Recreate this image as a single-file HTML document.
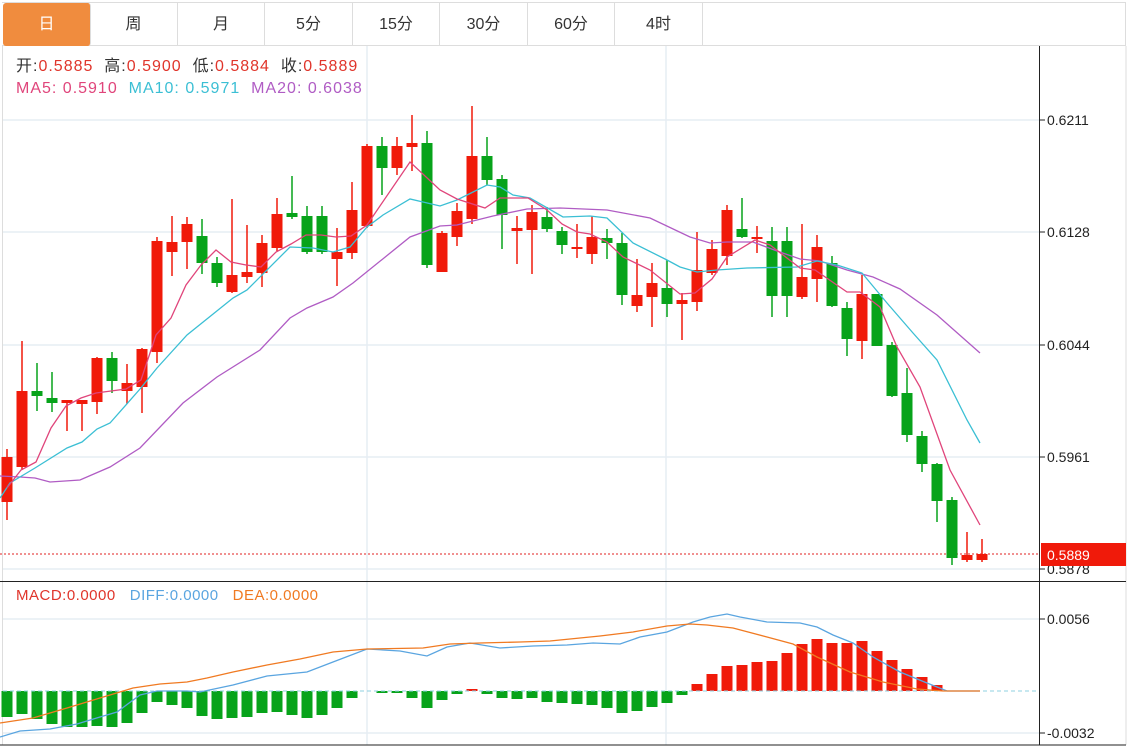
<!DOCTYPE html>
<html><head><meta charset="utf-8">
<style>
html,body{margin:0;padding:0;background:#fff;}
body{width:1136px;height:746px;position:relative;overflow:hidden;font-family:"Liberation Sans","Noto Sans CJK SC",sans-serif;}
.tabs{position:absolute;left:2px;top:2px;width:1124px;height:44px;border-top:1px solid #ddd;border-bottom:1px solid #ddd;border-right:1px solid #ddd;box-sizing:border-box;}
.tab{position:absolute;top:0;height:43px;line-height:43px;text-align:center;font-size:16px;color:#333;border-right:1px solid #ddd;box-sizing:border-box;}
.tab.on{background:#f08c3e;color:#fff;border-radius:3px;}
.lg{position:absolute;font-size:16px;letter-spacing:1px;white-space:pre;line-height:20px;height:20px;}
svg{position:absolute;left:0;top:0;}
</style></head><body>
<div class="tabs">
<div class="tab on" style="left:1px;width:88px">日</div>
<div class="tab" style="left:88px;width:88px">周</div>
<div class="tab" style="left:176px;width:87px">月</div>
<div class="tab" style="left:263px;width:88px">5分</div>
<div class="tab" style="left:351px;width:87px">15分</div>
<div class="tab" style="left:438px;width:88px">30分</div>
<div class="tab" style="left:526px;width:87px">60分</div>
<div class="tab" style="left:613px;width:88px">4时</div>
</div>
<svg width="1136" height="746" viewBox="0 0 1136 746">
<g stroke="#e6edf3" stroke-width="1.5">
<line x1="3" y1="120" x2="1039" y2="120"/><line x1="3" y1="232" x2="1039" y2="232"/><line x1="3" y1="345" x2="1039" y2="345"/><line x1="3" y1="457" x2="1039" y2="457"/><line x1="3" y1="569" x2="1039" y2="569"/>
<line x1="3" y1="619" x2="1039" y2="619"/><line x1="3" y1="733" x2="1039" y2="733"/>
<line x1="367" y1="46" x2="367" y2="745"/><line x1="666" y1="46" x2="666" y2="745"/>
</g>
<line x1="2.5" y1="46" x2="2.5" y2="745" stroke="#ddd"/>
<line x1="1126" y1="46" x2="1126" y2="745" stroke="#ddd"/>
<line x1="0" y1="581.5" x2="1126" y2="581.5" stroke="#222"/>
<line x1="0" y1="745" x2="1126" y2="745" stroke="#222"/>
<line x1="1039.5" y1="46" x2="1039.5" y2="745" stroke="#222"/>
<g stroke="#222"><line x1="1040" y1="120" x2="1045" y2="120"/><line x1="1040" y1="232" x2="1045" y2="232"/><line x1="1040" y1="345" x2="1045" y2="345"/><line x1="1040" y1="457" x2="1045" y2="457"/><line x1="1040" y1="569" x2="1045" y2="569"/><line x1="1040" y1="619" x2="1045" y2="619"/><line x1="1040" y1="733" x2="1045" y2="733"/></g>
<g font-family="Liberation Sans, sans-serif" font-size="14" fill="#222">
<text x="1047" y="125">0.6211</text><text x="1047" y="237">0.6128</text><text x="1047" y="350">0.6044</text><text x="1047" y="462">0.5961</text><text x="1047" y="574">0.5878</text><text x="1047" y="624">0.0056</text><text x="1047" y="738">-0.0032</text>
</g>
<line x1="0" y1="554" x2="1039" y2="554" stroke="#e02020" stroke-dasharray="2,2"/>
<rect x="1041" y="543" width="85" height="23" fill="#f01a0a"/>
<text x="1047" y="560" font-family="Liberation Sans, sans-serif" font-size="14" fill="#fff">0.5889</text>

<g fill="#f01a0a" stroke="#f01a0a" stroke-width="1.5">
<line x1="7" y1="449" x2="7" y2="520"/><rect x="1.5" y="457" width="11" height="45" stroke="none"/>
<line x1="22" y1="341" x2="22" y2="470"/><rect x="16.5" y="391" width="11" height="76" stroke="none"/>
<line x1="67" y1="400" x2="67" y2="431"/><rect x="61.5" y="400" width="11" height="3" stroke="none"/>
<line x1="82" y1="400" x2="82" y2="431"/><rect x="76.5" y="400" width="11" height="4" stroke="none"/>
<line x1="97" y1="357" x2="97" y2="414"/><rect x="91.5" y="358" width="11" height="44" stroke="none"/>
<line x1="127" y1="364" x2="127" y2="404"/><rect x="121.5" y="383" width="11" height="8" stroke="none"/>
<line x1="142" y1="348" x2="142" y2="413"/><rect x="136.5" y="349" width="11" height="38" stroke="none"/>
<line x1="157" y1="237" x2="157" y2="363"/><rect x="151.5" y="241" width="11" height="111" stroke="none"/>
<line x1="172" y1="216" x2="172" y2="276"/><rect x="166.5" y="242" width="11" height="10" stroke="none"/>
<line x1="187" y1="217" x2="187" y2="269"/><rect x="181.5" y="224" width="11" height="18" stroke="none"/>
<line x1="232" y1="199" x2="232" y2="293"/><rect x="226.5" y="275" width="11" height="17" stroke="none"/>
<line x1="247" y1="225" x2="247" y2="283"/><rect x="241.5" y="272" width="11" height="5" stroke="none"/>
<line x1="262" y1="235" x2="262" y2="287"/><rect x="256.5" y="243" width="11" height="30" stroke="none"/>
<line x1="277" y1="198" x2="277" y2="251"/><rect x="271.5" y="214" width="11" height="34" stroke="none"/>
<line x1="337" y1="228" x2="337" y2="286"/><rect x="331.5" y="252" width="11" height="7" stroke="none"/>
<line x1="352" y1="182" x2="352" y2="259"/><rect x="346.5" y="210" width="11" height="43" stroke="none"/>
<line x1="367" y1="144" x2="367" y2="228"/><rect x="361.5" y="146" width="11" height="80" stroke="none"/>
<line x1="397" y1="137" x2="397" y2="175"/><rect x="391.5" y="146" width="11" height="22" stroke="none"/>
<line x1="412" y1="115" x2="412" y2="171"/><rect x="406.5" y="143" width="11" height="4" stroke="none"/>
<line x1="442" y1="231" x2="442" y2="272"/><rect x="436.5" y="233" width="11" height="39" stroke="none"/>
<line x1="457" y1="203" x2="457" y2="246"/><rect x="451.5" y="211" width="11" height="26" stroke="none"/>
<line x1="472" y1="106" x2="472" y2="224"/><rect x="466.5" y="156" width="11" height="63" stroke="none"/>
<line x1="517" y1="216" x2="517" y2="264"/><rect x="511.5" y="228" width="11" height="3" stroke="none"/>
<line x1="532" y1="205" x2="532" y2="274"/><rect x="526.5" y="212" width="11" height="18" stroke="none"/>
<line x1="577" y1="224" x2="577" y2="258"/><rect x="571.5" y="247" width="11" height="2" stroke="none"/>
<line x1="592" y1="216" x2="592" y2="264"/><rect x="586.5" y="237" width="11" height="17" stroke="none"/>
<line x1="637" y1="259" x2="637" y2="312"/><rect x="631.5" y="295" width="11" height="11" stroke="none"/>
<line x1="652" y1="263" x2="652" y2="327"/><rect x="646.5" y="283" width="11" height="14" stroke="none"/>
<line x1="682" y1="293" x2="682" y2="340"/><rect x="676.5" y="300" width="11" height="4" stroke="none"/>
<line x1="697" y1="232" x2="697" y2="311"/><rect x="691.5" y="270" width="11" height="32" stroke="none"/>
<line x1="712" y1="240" x2="712" y2="275"/><rect x="706.5" y="249" width="11" height="24" stroke="none"/>
<line x1="727" y1="205" x2="727" y2="265"/><rect x="721.5" y="210" width="11" height="46" stroke="none"/>
<line x1="757" y1="226" x2="757" y2="253"/><rect x="751.5" y="237" width="11" height="2" stroke="none"/>
<line x1="802" y1="224" x2="802" y2="299"/><rect x="796.5" y="277" width="11" height="20" stroke="none"/>
<line x1="817" y1="235" x2="817" y2="302"/><rect x="811.5" y="247" width="11" height="32" stroke="none"/>
<line x1="862" y1="275" x2="862" y2="359"/><rect x="856.5" y="294" width="11" height="47" stroke="none"/>
<line x1="967" y1="532" x2="967" y2="562"/><rect x="961.5" y="555" width="11" height="5" stroke="none"/>
<line x1="982" y1="539" x2="982" y2="562"/><rect x="976.5" y="554" width="11" height="6" stroke="none"/>
</g>
<g fill="#07a31a" stroke="#07a31a" stroke-width="1.5">
<line x1="37" y1="363" x2="37" y2="411"/><rect x="31.5" y="391" width="11" height="5" stroke="none"/>
<line x1="52" y1="372" x2="52" y2="412"/><rect x="46.5" y="398" width="11" height="5" stroke="none"/>
<line x1="112" y1="352" x2="112" y2="393"/><rect x="106.5" y="358" width="11" height="23" stroke="none"/>
<line x1="202" y1="219" x2="202" y2="274"/><rect x="196.5" y="236" width="11" height="27" stroke="none"/>
<line x1="217" y1="257" x2="217" y2="287"/><rect x="211.5" y="263" width="11" height="20" stroke="none"/>
<line x1="292" y1="176" x2="292" y2="219"/><rect x="286.5" y="213" width="11" height="4" stroke="none"/>
<line x1="307" y1="206" x2="307" y2="254"/><rect x="301.5" y="216" width="11" height="36" stroke="none"/>
<line x1="322" y1="206" x2="322" y2="254"/><rect x="316.5" y="216" width="11" height="36" stroke="none"/>
<line x1="382" y1="137" x2="382" y2="195"/><rect x="376.5" y="146" width="11" height="22" stroke="none"/>
<line x1="427" y1="131" x2="427" y2="268"/><rect x="421.5" y="143" width="11" height="122" stroke="none"/>
<line x1="487" y1="137" x2="487" y2="185"/><rect x="481.5" y="156" width="11" height="24" stroke="none"/>
<line x1="502" y1="175" x2="502" y2="249"/><rect x="496.5" y="179" width="11" height="36" stroke="none"/>
<line x1="547" y1="207" x2="547" y2="232"/><rect x="541.5" y="217" width="11" height="12" stroke="none"/>
<line x1="562" y1="227" x2="562" y2="254"/><rect x="556.5" y="231" width="11" height="14" stroke="none"/>
<line x1="607" y1="229" x2="607" y2="259"/><rect x="601.5" y="238" width="11" height="5" stroke="none"/>
<line x1="622" y1="233" x2="622" y2="305"/><rect x="616.5" y="243" width="11" height="52" stroke="none"/>
<line x1="667" y1="260" x2="667" y2="317"/><rect x="661.5" y="288" width="11" height="16" stroke="none"/>
<line x1="742" y1="198" x2="742" y2="238"/><rect x="736.5" y="229" width="11" height="8" stroke="none"/>
<line x1="772" y1="227" x2="772" y2="317"/><rect x="766.5" y="241" width="11" height="55" stroke="none"/>
<line x1="787" y1="227" x2="787" y2="317"/><rect x="781.5" y="241" width="11" height="55" stroke="none"/>
<line x1="832" y1="256" x2="832" y2="307"/><rect x="826.5" y="263" width="11" height="43" stroke="none"/>
<line x1="847" y1="302" x2="847" y2="356"/><rect x="841.5" y="308" width="11" height="31" stroke="none"/>
<line x1="877" y1="294" x2="877" y2="346"/><rect x="871.5" y="294" width="11" height="52" stroke="none"/>
<line x1="892" y1="342" x2="892" y2="397"/><rect x="886.5" y="345" width="11" height="51" stroke="none"/>
<line x1="907" y1="368" x2="907" y2="442"/><rect x="901.5" y="393" width="11" height="42" stroke="none"/>
<line x1="922" y1="431" x2="922" y2="472"/><rect x="916.5" y="436" width="11" height="28" stroke="none"/>
<line x1="937" y1="463" x2="937" y2="522"/><rect x="931.5" y="464" width="11" height="37" stroke="none"/>
<line x1="952" y1="497" x2="952" y2="565"/><rect x="946.5" y="500" width="11" height="58" stroke="none"/>
</g>
<g fill="none" stroke-width="1.3">
<polyline stroke="#b05cc4" points="0,476 20,477 35,478 50,482 80,480 110,467 140,448 183,403 217,377 260,350 290,318 307,308 333,297 353,283 410,237 440,226 457,225 493,216 527,209 560,208 607,210 650,218 690,237 710,243 727,242 753,242 777,251 800,259 820,261 847,270 873,277 900,289 937,315 980,353"/>
<polyline stroke="#3bbfd4" points="0,498 10,483 35,468 67,448 82,442 97,429 110,423 140,389 157,368 187,335 233,298 247,290 290,247 313,248 333,252 350,247 367,227 383,215 410,199 440,206 457,200 487,185 500,187 513,195 530,198 563,217 590,216 607,218 633,243 667,260 680,267 697,272 717,270 747,268 797,267 817,261 837,265 862,273 887,303 913,333 937,360 967,420 980,443"/>
<polyline stroke="#e0457b" points="7,488 21,470 36,462 51,428 66,406 81,398 96,393 111,391 126,389 141,380 156,335 171,318 186,285 201,265 216,250 231,262 246,265 261,267 276,252 291,244 306,235 321,235 336,237 351,236 367,225 410,162 440,190 457,199 485,208 500,198 528,198 547,210 562,224 577,232 590,234 607,242 623,257 650,270 680,294 695,293 712,279 727,257 755,240 770,245 800,268 815,270 847,292 860,292 880,307 897,347 920,387 950,470 980,525"/>
</g>
<g fill="#07a31a">
<rect x="1.5" y="691" width="11" height="26"/><rect x="16.5" y="691" width="11" height="23"/><rect x="31.5" y="691" width="11" height="28"/><rect x="46.5" y="691" width="11" height="33"/><rect x="61.5" y="691" width="11" height="36"/><rect x="76.5" y="691" width="11" height="36"/><rect x="91.5" y="691" width="11" height="35"/><rect x="106.5" y="691" width="11" height="36"/><rect x="121.5" y="691" width="11" height="32"/><rect x="136.5" y="691" width="11" height="22"/><rect x="151.5" y="691" width="11" height="11"/><rect x="166.5" y="691" width="11" height="14"/><rect x="181.5" y="691" width="11" height="17"/><rect x="196.5" y="691" width="11" height="25"/><rect x="211.5" y="691" width="11" height="28"/><rect x="226.5" y="691" width="11" height="27"/><rect x="241.5" y="691" width="11" height="26"/><rect x="256.5" y="691" width="11" height="22"/><rect x="271.5" y="691" width="11" height="21"/><rect x="286.5" y="691" width="11" height="24"/><rect x="301.5" y="691" width="11" height="27"/><rect x="316.5" y="691" width="11" height="24"/><rect x="331.5" y="691" width="11" height="17"/><rect x="346.5" y="691" width="11" height="7"/><rect x="376.5" y="691" width="11" height="2"/><rect x="391.5" y="691" width="11" height="2"/><rect x="406.5" y="691" width="11" height="7"/><rect x="421.5" y="691" width="11" height="17"/><rect x="436.5" y="691" width="11" height="9"/><rect x="451.5" y="691" width="11" height="3"/><rect x="481.5" y="691" width="11" height="3"/><rect x="496.5" y="691" width="11" height="7"/><rect x="511.5" y="691" width="11" height="8"/><rect x="526.5" y="691" width="11" height="7"/><rect x="541.5" y="691" width="11" height="11"/><rect x="556.5" y="691" width="11" height="12"/><rect x="571.5" y="691" width="11" height="13"/><rect x="586.5" y="691" width="11" height="14"/><rect x="601.5" y="691" width="11" height="17"/><rect x="616.5" y="691" width="11" height="22"/><rect x="631.5" y="691" width="11" height="20"/><rect x="646.5" y="691" width="11" height="16"/><rect x="661.5" y="691" width="11" height="12"/><rect x="676.5" y="691" width="11" height="4"/>
</g>
<g fill="#f01a0a">
<rect x="466.5" y="689" width="11" height="2"/>
<rect x="691.5" y="684" width="11" height="7"/><rect x="706.5" y="674" width="11" height="17"/><rect x="721.5" y="666" width="11" height="25"/><rect x="736.5" y="665" width="11" height="26"/><rect x="751.5" y="662" width="11" height="29"/><rect x="766.5" y="661" width="11" height="30"/><rect x="781.5" y="653" width="11" height="38"/><rect x="796.5" y="644" width="11" height="47"/><rect x="811.5" y="639" width="11" height="52"/><rect x="826.5" y="643" width="11" height="48"/><rect x="841.5" y="643" width="11" height="48"/><rect x="856.5" y="641" width="11" height="50"/><rect x="871.5" y="651" width="11" height="40"/><rect x="886.5" y="660" width="11" height="31"/><rect x="901.5" y="669" width="11" height="22"/><rect x="916.5" y="677" width="11" height="14"/><rect x="931.5" y="685" width="11" height="6"/>
</g>
<line x1="3" y1="691" x2="1039" y2="691" stroke="#8fd0e0" stroke-dasharray="4,3"/>
<g fill="none" stroke-width="1.3">
<polyline stroke="#5aa5e0" points="0,737 20,731 50,729 77,724 100,717 117,712 140,695 157,691 187,691 200,692 233,685 267,676 307,672 333,662 367,649 400,651 427,656 447,647 470,643 500,648 533,646 567,645 593,643 620,644 640,637 667,632 693,622 710,617 727,614 740,617 767,622 800,623 817,627 833,635 853,643 873,657 900,672 927,683 947,691 980,691"/>
<polyline stroke="#f07a22" points="0,723 33,718 67,708 100,698 133,688 160,684 187,682 207,678 233,672 267,665 300,659 333,652 367,649 423,648 450,644 480,643 520,642 550,641 600,636 633,632 667,626 690,624 707,625 733,628 767,637 793,644 817,657 850,672 883,682 917,689 943,691 980,691"/>
</g>
</svg>
<div class="lg" style="left:16px;top:57px"><span style="color:#333">开:</span><span style="color:#e0352b">0.5885</span>  <span style="color:#333">高:</span><span style="color:#e0352b">0.5900</span>  <span style="color:#333">低:</span><span style="color:#e0352b">0.5884</span>  <span style="color:#333">收:</span><span style="color:#e0352b">0.5889</span></div>
<div class="lg" style="left:16px;top:79px"><span style="color:#e0457b">MA5: 0.5910</span>  <span style="color:#3bbfd4">MA10: 0.5971</span>  <span style="color:#b05cc4">MA20: 0.6038</span></div>
<div class="lg" style="left:16px;top:586px;font-size:15px;letter-spacing:0.5px"><span style="color:#e0352b">MACD:0.0000</span>   <span style="color:#5aa5e0">DIFF:0.0000</span>   <span style="color:#f07a22">DEA:0.0000</span></div>
</body></html>
